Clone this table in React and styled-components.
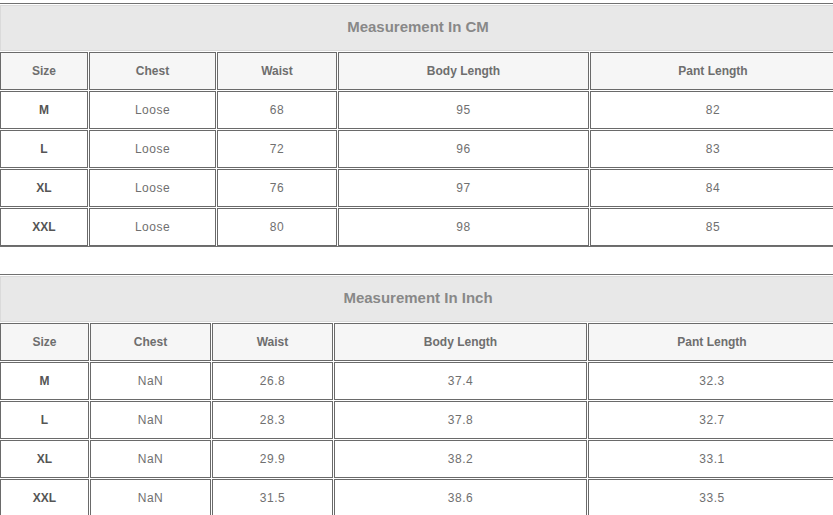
import styled, { createGlobalStyle } from "styled-components";

const GlobalStyle = createGlobalStyle`
  html, body {
    margin: 0;
    padding: 0;
    background: #ffffff;
  }
  body {
    font-family: "Liberation Sans", Arial, sans-serif;
  }
`;

const Page = styled.div`
  width: 833px;
  height: 515px;
  overflow: hidden;
  background: #ffffff;
`;

const Table = styled.div`
  display: grid;
  grid-template-columns: ${(p) => p.$cols};
  gap: 1px;
  width: max-content;
  margin-top: ${(p) => p.$top}px;
  padding-top: 1px;
  border-top: 1px solid #707070;
  border-bottom: 1px solid #707070;
`;

const Caption = styled.div`
  grid-column: 1 / -1;
  height: 46px;
  box-sizing: border-box;
  border: 1px solid #dadada;
  background: #e8e8e8;
  display: flex;
  align-items: center;
  justify-content: center;
  padding-bottom: 3px;
  font-size: 15px;
  font-weight: bold;
  color: #888888;
`;

const Cell = styled.div`
  height: 38px;
  box-sizing: border-box;
  border: 1px solid #6a6a6a;
  background: ${(p) => (p.$head ? "#f6f6f6" : "#ffffff")};
  display: flex;
  align-items: center;
  justify-content: center;
  font-size: 12px;
  font-weight: ${(p) => (p.$bold ? "bold" : "normal")};
  letter-spacing: ${(p) => (p.$bold ? "0" : "0.5px")};
  color: ${(p) => (p.$head ? "#6e6e6e" : p.$bold ? "#555555" : "#707070")};
`;

const headers = ["Size", "Chest", "Waist", "Body Length", "Pant Length"];

const tables = [
  {
    title: "Measurement In CM",
    top: 3,
    cols: "88px 127px 120px 251px 246px",
    rows: [
      ["M", "Loose", "68", "95", "82"],
      ["L", "Loose", "72", "96", "83"],
      ["XL", "Loose", "76", "97", "84"],
      ["XXL", "Loose", "80", "98", "85"],
    ],
  },
  {
    title: "Measurement In Inch",
    top: 27,
    cols: "89px 121px 121px 253px 248px",
    rows: [
      ["M", "NaN", "26.8", "37.4", "32.3"],
      ["L", "NaN", "28.3", "37.8", "32.7"],
      ["XL", "NaN", "29.9", "38.2", "33.1"],
      ["XXL", "NaN", "31.5", "38.6", "33.5"],
    ],
  },
];

const SizeTable = ({ title, top, cols, rows }) => (
  <Table $top={top} $cols={cols}>
    <Caption>{title}</Caption>
    {headers.map((h) => (
      <Cell key={h} $head $bold>
        {h}
      </Cell>
    ))}
    {rows.map((row) =>
      row.map((v, i) => (
        <Cell key={row[0] + i} $bold={i === 0}>
          {v}
        </Cell>
      ))
    )}
  </Table>
);

const App = () => {
  return (
    <Page>
      <GlobalStyle />
      {tables.map((t) => (
        <SizeTable key={t.title} {...t} />
      ))}
    </Page>
  );
};

export default App;
